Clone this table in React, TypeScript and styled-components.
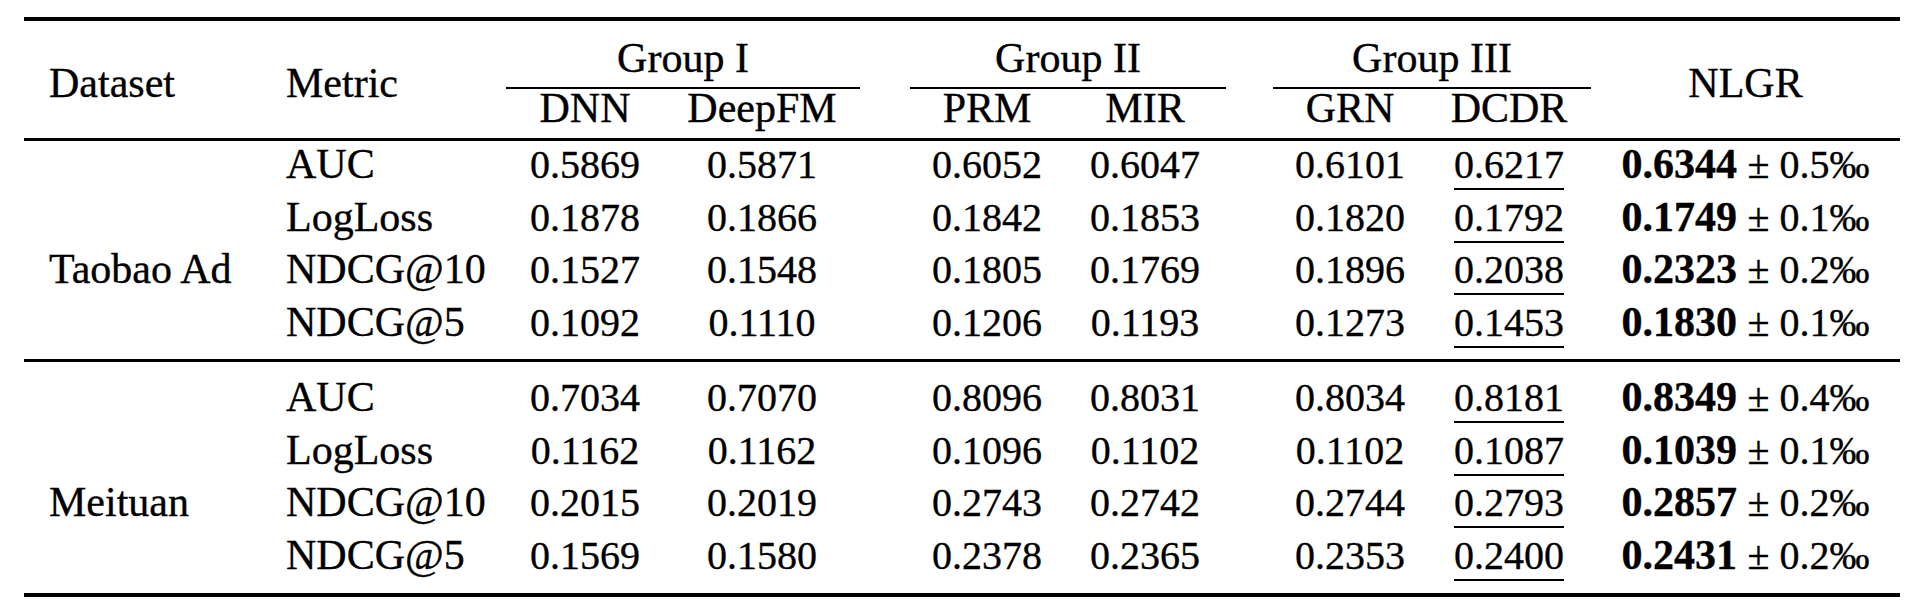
import React from 'react'
import styled, { createGlobalStyle } from 'styled-components'

const GlobalStyle = createGlobalStyle`
  html, body {
    margin: 0;
    padding: 0;
    background: #fff;
  }
  body {
    font-family: 'Liberation Serif', 'Times New Roman', serif;
    color: #000;
  }
`

const Page = styled.div`
  padding: 17px 0 0 24px;
`

// 11 tracks: Dataset, Metric, DNN, DeepFM, gap, PRM, MIR, gap, GRN, DCDR, NLGR
const Table = styled.div`
  display: grid;
  width: 1876px;
  grid-template-columns: 237px 245px 158px 196px 50px 154px 162px 47px 154px 164px 309px;
  font-size: 42px;
  line-height: 30px;
  -webkit-text-stroke: 0.35px #000;
`

const Rule = styled.div<{ $weight: number; $above?: number; $below?: number }>`
  grid-column: 1 / -1;
  height: ${(p) => p.$weight}px;
  background: #000;
  margin-top: ${(p) => p.$above ?? 0}px;
  margin-bottom: ${(p) => p.$below ?? 0}px;
`

const HeadCell = styled.div<{ $left?: boolean }>`
  grid-row: span 2;
  padding: 47px 0 0 ${(p) => (p.$left ? 25 : 0)}px;
  text-align: ${(p) => (p.$left ? 'left' : 'center')};
`

const GroupHead = styled.div`
  grid-column: span 2;
  text-align: center;
  padding: 22px 0 14px;
  border-bottom: 2px solid #000;
`

const Gap = styled.div``

const SubHead = styled.div`
  text-align: center;
  padding: 4px 0 15px;
`

const Cell = styled.div<{ $left?: boolean }>`
  height: 52.5px;
  box-sizing: border-box;
  padding: 8px 0 0 ${(p) => (p.$left ? 25 : 0)}px;
  text-align: ${(p) => (p.$left ? 'left' : 'center')};
  white-space: nowrap;
`

const Num = styled.span`
  font-size: 40px;
`

const Second = styled(Num)`
  text-decoration: underline;
  text-decoration-thickness: 2px;
  text-underline-offset: 10px;
`

const Best = styled.span`
  font-size: 42px;
  font-weight: 700;
`

type Row = [string, string, string, string, string, string, string, string, string]

const datasets: { name: string; rows: Row[] }[] = [
  {
    name: 'Taobao Ad',
    rows: [
      ['AUC', '0.5869', '0.5871', '0.6052', '0.6047', '0.6101', '0.6217', '0.6344', '0.5'],
      ['LogLoss', '0.1878', '0.1866', '0.1842', '0.1853', '0.1820', '0.1792', '0.1749', '0.1'],
      ['NDCG@10', '0.1527', '0.1548', '0.1805', '0.1769', '0.1896', '0.2038', '0.2323', '0.2'],
      ['NDCG@5', '0.1092', '0.1110', '0.1206', '0.1193', '0.1273', '0.1453', '0.1830', '0.1'],
    ],
  },
  {
    name: 'Meituan',
    rows: [
      ['AUC', '0.7034', '0.7070', '0.8096', '0.8031', '0.8034', '0.8181', '0.8349', '0.4'],
      ['LogLoss', '0.1162', '0.1162', '0.1096', '0.1102', '0.1102', '0.1087', '0.1039', '0.1'],
      ['NDCG@10', '0.2015', '0.2019', '0.2743', '0.2742', '0.2744', '0.2793', '0.2857', '0.2'],
      ['NDCG@5', '0.1569', '0.1580', '0.2378', '0.2365', '0.2353', '0.2400', '0.2431', '0.2'],
    ],
  },
]

function DataRow({ label, row }: { label: string; row: Row }) {
  const [metric, dnn, deepfm, prm, mir, grn, dcdr, nlgr, dev] = row
  return (
    <>
      <Cell $left>{label}</Cell>
      <Cell $left>{metric}</Cell>
      <Cell><Num>{dnn}</Num></Cell>
      <Cell><Num>{deepfm}</Num></Cell>
      <Gap />
      <Cell><Num>{prm}</Num></Cell>
      <Cell><Num>{mir}</Num></Cell>
      <Gap />
      <Cell><Num>{grn}</Num></Cell>
      <Cell><Second>{dcdr}</Second></Cell>
      <Cell>
        <Best>{nlgr}</Best> <Num>± {dev}‰</Num>
      </Cell>
    </>
  )
}

export default function App() {
  return (
    <Page>
      <GlobalStyle />
      <Table>
        <Rule $weight={4} />

        <HeadCell $left>Dataset</HeadCell>
        <HeadCell $left>Metric</HeadCell>
        <GroupHead>Group I</GroupHead>
        <Gap />
        <GroupHead>Group II</GroupHead>
        <Gap />
        <GroupHead>Group III</GroupHead>
        <HeadCell>NLGR</HeadCell>

        <SubHead>DNN</SubHead>
        <SubHead>DeepFM</SubHead>
        <Gap />
        <SubHead>PRM</SubHead>
        <SubHead>MIR</SubHead>
        <Gap />
        <SubHead>GRN</SubHead>
        <SubHead>DCDR</SubHead>

        <Rule $weight={3} />

        {datasets.map((set, i) => (
          <React.Fragment key={set.name}>
            {i > 0 && <Rule $weight={3} $above={8} $below={12} />}
            {set.rows.map((row, j) => (
              <DataRow key={row[0]} label={j === 2 ? set.name : ''} row={row} />
            ))}
          </React.Fragment>
        ))}

        <Rule $weight={4} $above={9} />
      </Table>
    </Page>
  )
}
